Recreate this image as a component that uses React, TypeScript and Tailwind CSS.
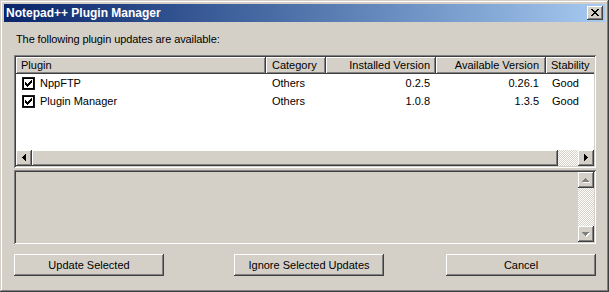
const raised =
  "shadow-[inset_-1px_-1px_#404040,inset_1px_1px_#ffffff,inset_-2px_-2px_#808080,inset_2px_2px_#d4d0c8]";
const sunken =
  "shadow-[inset_1px_1px_#808080,inset_-1px_-1px_#ffffff,inset_2px_2px_#404040,inset_-2px_-2px_#d4d0c8]";
const checker =
  "bg-[repeating-conic-gradient(#d4d0c8_0_25%,#ffffff_0_50%)] bg-[length:2px_2px]";

function Pixels({ rows, color, x = 0, y = 0 }: { rows: string[]; color: string; x?: number; y?: number }) {
  return (
    <>
      {rows.flatMap((r, j) =>
        r.split("").map((c, i) =>
          c === "X" ? <rect key={`${i}-${j}`} x={x + i} y={y + j} width={1} height={1} fill={color} /> : null
        )
      )}
    </>
  );
}

const leftArrow = ["...X", "..XX", ".XXX", "XXXX", ".XXX", "..XX", "...X"];
const rightArrow = ["X...", "XX..", "XXX.", "XXXX", "XXX.", "XX..", "X..."];
const upArrow = ["...X...", "..XXX..", ".XXXXX.", "XXXXXXX"];
const downArrow = ["XXXXXXX", ".XXXXX.", "..XXX..", "...X..."];
const closeGlyph = ["XX....XX", ".XX..XX.", "..XXXX..", "...XX...", "..XXXX..", ".XX..XX.", "XX....XX"];
const checkGlyph = ["......X", ".....XX", "X...XXX", "XX.XXX.", "XXXXX..", ".XXX...", "..X...."];

function ArrowButton({ glyph, disabled }: { glyph: string[]; disabled?: boolean }) {
  const x = Math.floor((16 - glyph[0].length) / 2);
  const y = Math.floor((16 - glyph.length) / 2);
  return (
    <div className={`w-[16px] h-[16px] shrink-0 bg-[#d4d0c8] ${raised}`}>
      <svg width={16} height={16} className="block" shapeRendering="crispEdges">
        {disabled && <Pixels rows={glyph} color="#ffffff" x={x + 1} y={y + 1} />}
        <Pixels rows={glyph} color={disabled ? "#808080" : "#000000"} x={x} y={y} />
      </svg>
    </div>
  );
}

function CheckBox() {
  return (
    <svg width={13} height={13} className="block shrink-0" shapeRendering="crispEdges">
      <rect x={0} y={0} width={13} height={13} fill="#1c1c1c" />
      <rect x={1} y={1} width={11} height={11} fill="#000000" />
      <rect x={2} y={2} width={9} height={9} fill="#ffffff" />
      <Pixels rows={checkGlyph} color="#000000" x={3} y={3} />
    </svg>
  );
}

const columns = [
  { name: "Plugin", w: "w-[250px]", align: "text-left pl-[5px]" },
  { name: "Category", w: "w-[60px]", align: "text-left pl-[6px]" },
  { name: "Installed Version", w: "w-[110px]", align: "text-right pr-[6px]" },
  { name: "Available Version", w: "w-[110px]", align: "text-right pr-[7px]" },
  { name: "Stability", w: "w-[60px]", align: "text-left pl-[5px]" },
];

const plugins = [
  { name: "NppFTP", category: "Others", installed: "0.2.5", available: "0.26.1", stability: "Good" },
  { name: "Plugin Manager", category: "Others", installed: "1.0.8", available: "1.3.5", stability: "Good" },
];

function Button({ label, className }: { label: string; className: string }) {
  return (
    <div className={`h-[22px] w-[150px] flex items-center justify-center bg-[#d4d0c8] ${raised} ${className}`}>
      {label}
    </div>
  );
}

export default function App() {
  return (
    <div className="w-[609px] h-[292px] bg-[#d4d0c8] p-[4px] flex flex-col text-[11px] text-black font-['Liberation_Sans',Arial,sans-serif] shadow-[inset_-1px_-1px_#404040,inset_1px_1px_#d4d0c8,inset_-2px_-2px_#808080,inset_2px_2px_#ffffff] overflow-hidden">
      {/* title bar */}
      <div className="h-[18px] shrink-0 flex items-center bg-linear-to-r from-[#0a246a] to-[#a6caf0] px-[2px]">
        <span className="text-white font-bold text-[12px] leading-[14px]">Notepad++ Plugin Manager</span>
        <div className={`ml-auto w-[16px] h-[14px] bg-[#d4d0c8] ${raised}`}>
          <svg width={16} height={14} className="block" shapeRendering="crispEdges">
            <Pixels rows={closeGlyph} color="#000000" x={4} y={3} />
          </svg>
        </div>
      </div>

      <div className="flex flex-col pl-[10px]">
        <div className="mt-[11px] leading-[13px] pl-[2px] tracking-[-0.1px]">The following plugin updates are available:</div>

        {/* plugin list */}
        <div className={`mt-[9px] w-[582px] h-[113px] p-[2px] bg-white flex flex-col ${sunken}`}>
          <div className="flex h-[17px] shrink-0 overflow-hidden bg-[#d4d0c8]">
            {columns.map((c) => (
              <div
                key={c.name}
                className={`${c.w} shrink-0 h-[17px] leading-[16px] whitespace-nowrap ${c.align} shadow-[inset_-1px_-1px_#404040,inset_1px_1px_#ffffff,inset_-2px_-2px_#808080]`}
              >
                {c.name}
              </div>
            ))}
          </div>
          <div className="flex-1 overflow-hidden">
            {plugins.map((p) => (
              <div key={p.name} className="flex h-[18px] items-center whitespace-nowrap">
                <div className="w-[250px] shrink-0 flex items-center pl-[6px] gap-[5px]">
                  <CheckBox />
                  <span>{p.name}</span>
                </div>
                <div className="w-[60px] shrink-0 pl-[6px]">{p.category}</div>
                <div className="w-[110px] shrink-0 text-right pr-[6px]">{p.installed}</div>
                <div className="w-[110px] shrink-0 text-right pr-[7px]">{p.available}</div>
                <div className="w-[48px] shrink-0 pl-[6px]">{p.stability}</div>
              </div>
            ))}
          </div>
          {/* horizontal scrollbar */}
          <div className="flex h-[16px] shrink-0">
            <ArrowButton glyph={leftArrow} />
            <div className={`flex-1 bg-[#d4d0c8] ${raised}`} />
            <div className={`w-[20px] shrink-0 ${checker}`} />
            <ArrowButton glyph={rightArrow} />
          </div>
        </div>

        {/* description box */}
        <div className={`mt-[2px] w-[582px] h-[74px] p-[2px] flex bg-[#d4d0c8] ${sunken}`}>
          <div className="flex-1" />
          <div className="w-[16px] flex flex-col">
            <ArrowButton glyph={upArrow} disabled />
            <div className={`flex-1 ${checker}`} />
            <ArrowButton glyph={downArrow} disabled />
          </div>
        </div>

        {/* buttons */}
        <div className="mt-[10px] flex">
          <Button label="Update Selected" className="" />
          <Button label="Ignore Selected Updates" className="ml-[70px]" />
          <Button label="Cancel" className="ml-[62px]" />
        </div>
      </div>
    </div>
  );
}
